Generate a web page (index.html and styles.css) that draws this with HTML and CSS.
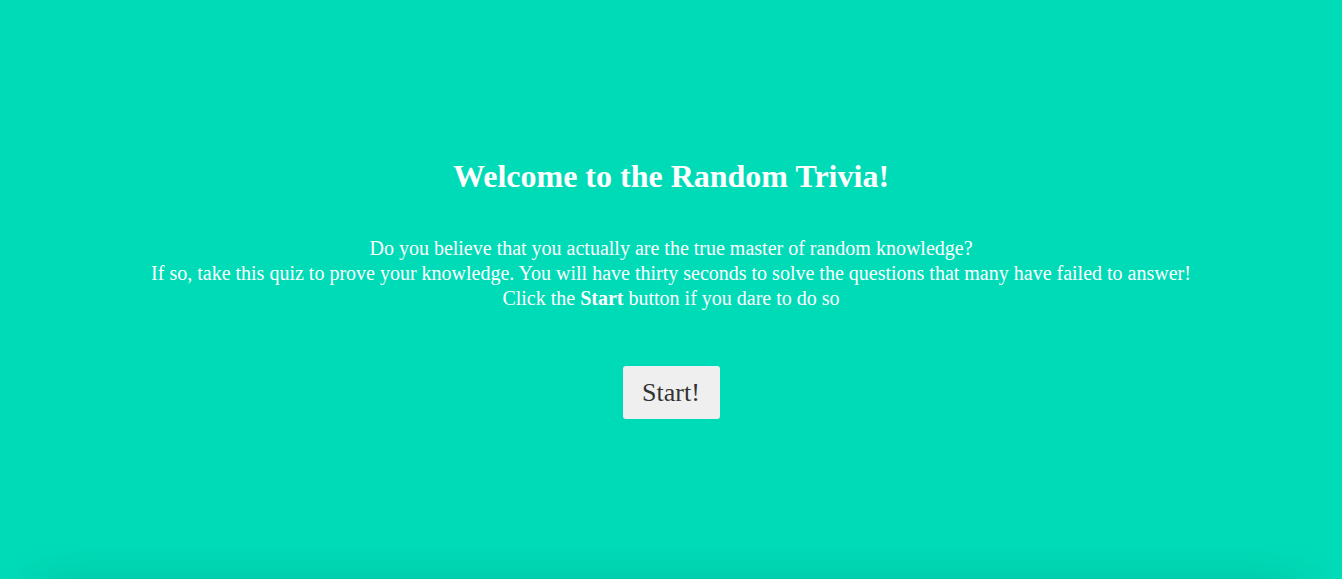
FILE: index.html
```html
<!DOCTYPE html>
<html>
<head>
<meta charset="utf-8">
<link rel="stylesheet" href="styles.css">
</head>
<body>
<div class="page">
  <div class="card">
    <h1 class="title">Welcome to the Random Trivia!</h1>
    <p class="intro">Do you believe that you actually are the true master of random knowledge?<br>If so, take this quiz to prove your knowledge. You will have thirty seconds to solve the questions that many have failed to answer!<br>Click the <b>Start</b> button if you dare to do so</p>
    <button class="start">Start!</button>
  </div>
  <div class="next"></div>
</div>
</body>
</html>
```

FILE: styles.css
```css
html, body {
  margin: 0;
  padding: 0;
  background: #00dbb7;
  height: 100%;
  overflow: hidden;
}
.page {
  height: 100%;
}
.card {
  height: 595px;
  box-sizing: border-box;
  padding-top: 155px;
  text-align: center;
  color: #ffffff;
  font-family: "Liberation Serif", "Times New Roman", serif;
}
.next {
  margin: 0 40px;
  height: 200px;
  background: #00dbb7;
  box-shadow: 0 0 50px rgba(0, 0, 0, 0.22);
}
.title {
  margin: 0;
  font-size: 32px;
  font-weight: bold;
  line-height: 42px;
}
.intro {
  margin: 39px 0 0;
  font-size: 20px;
  line-height: 25px;
}
.start {
  margin-top: 55px;
  font-family: "Liberation Serif", "Times New Roman", serif;
  font-size: 26px;
  color: #333333;
  background: #efefef;
  border: none;
  border-radius: 3px;
  width: 97px;
  height: 53px;
  padding: 0;
}
```
